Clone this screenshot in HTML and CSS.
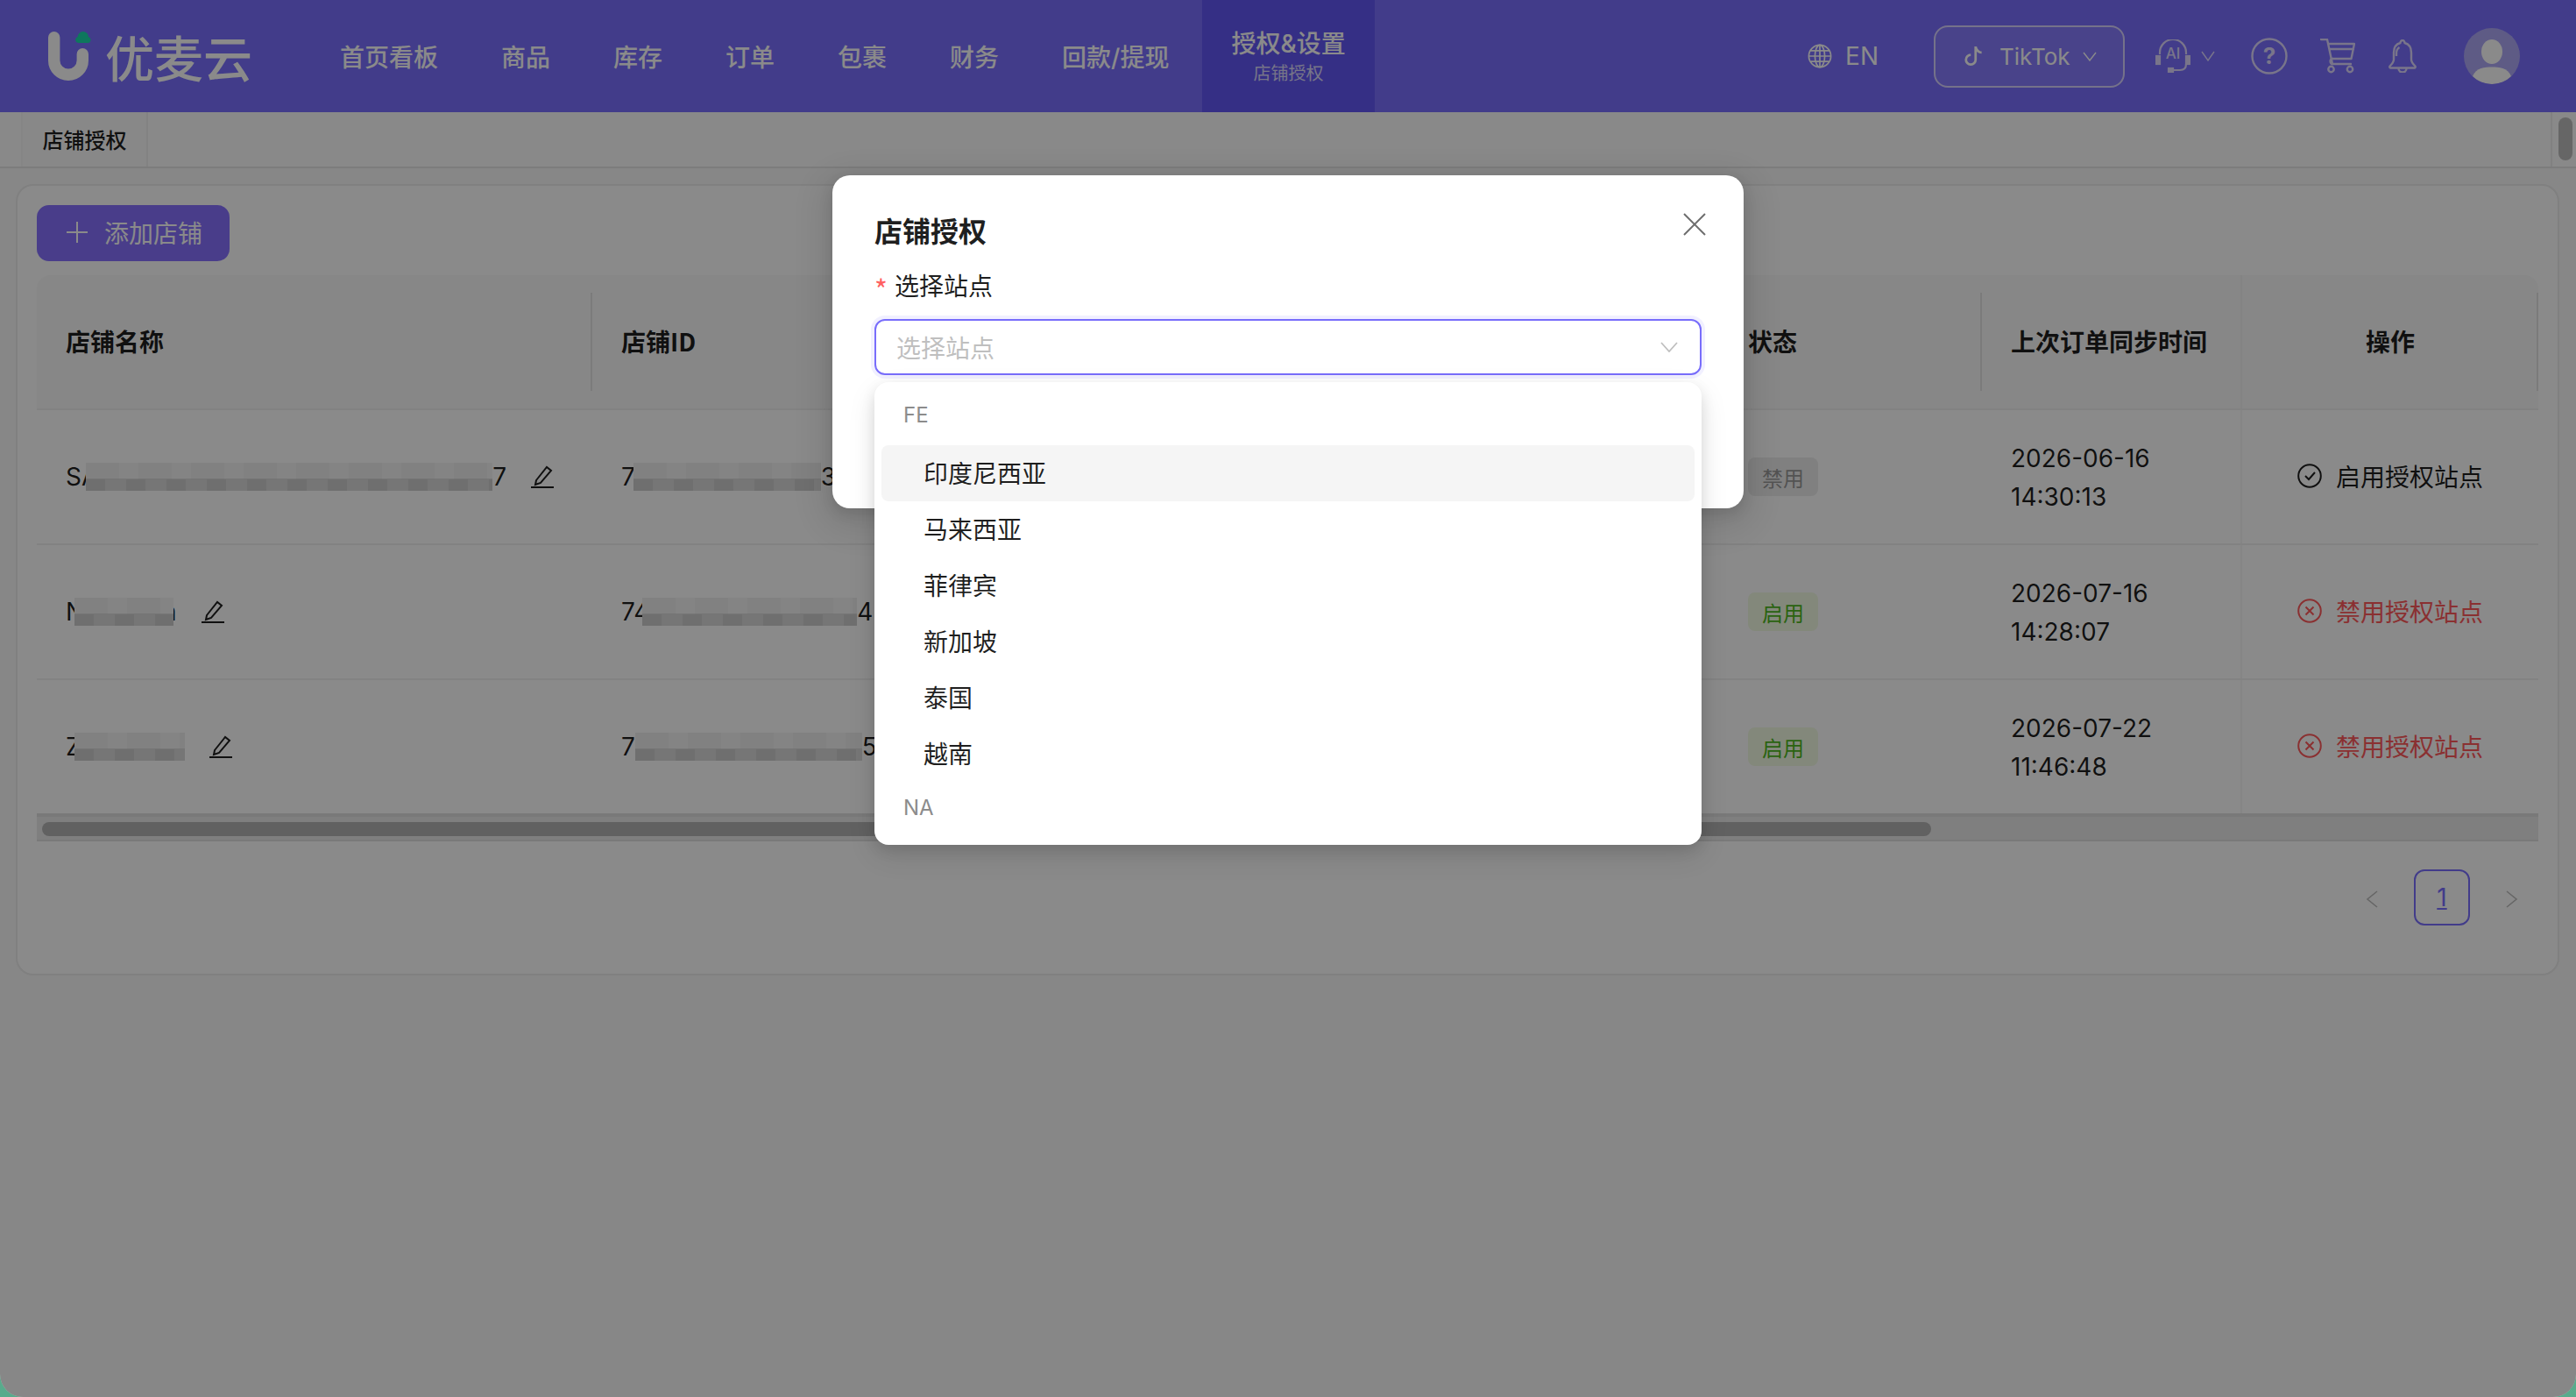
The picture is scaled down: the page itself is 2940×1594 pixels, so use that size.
FILE: index.html
```html
<!DOCTYPE html>
<html lang="zh-CN">
<head>
<meta charset="utf-8">
<title>店铺授权</title>
<link rel="stylesheet" href="styles.css">
</head>
<body>
<div class="app">
  <header class="topbar">
    <div class="logo">
      <svg class="logo-mark" viewBox="0 0 50 56" width="50" height="56">
        <path d="M6.7 6.7V33a16.3 16.3 0 0 0 32.6 0V25.7" fill="none" stroke="#fff" stroke-width="13.4" stroke-linecap="round"/>
        <path class="logo-cloud" d="M34.5 13a3.6 3.6 0 0 1-.9-7A6.2 6.2 0 0 1 40 0a6.2 6.2 0 0 1 6 6 3.6 3.6 0 0 1-.5 7z"/>
      </svg>
      <span class="logo-text">优麦云</span>
    </div>
    <nav class="nav">
      <a class="nav-item">首页看板</a>
      <a class="nav-item">商品</a>
      <a class="nav-item">库存</a>
      <a class="nav-item">订单</a>
      <a class="nav-item">包裹</a>
      <a class="nav-item">财务</a>
      <a class="nav-item">回款/提现</a>
      <a class="nav-item nav-active"><span class="nav-title">授权&amp;设置</span><span class="nav-sub">店铺授权</span></a>
    </nav>
    <div class="tools">
      <div class="lang">
        <svg viewBox="0 0 28 28" width="28" height="28" fill="none" stroke="currentColor" stroke-width="1.7"><circle cx="14" cy="14" r="12.6"/><ellipse cx="14" cy="14" rx="5.6" ry="12.6"/><path d="M14 1.4v25.2M1.4 14h25.2M3.2 7.8h21.6M3.2 20.2h21.6"/></svg>
        <span>EN</span>
      </div>
      <button class="platform">
        <svg viewBox="0 0 16 16" width="22" height="24" fill="currentColor"><path d="M9 0h1.98c.144.715.54 1.617 1.235 2.512C12.895 3.389 13.797 4 15 4v2c-1.753 0-3.07-.814-4-1.829V11a5 5 0 1 1-5-5v2a3 3 0 1 0 3 3V0Z"/></svg>
        <span>TikTok</span>
        <svg class="caret" viewBox="0 0 16 11" width="16" height="11" fill="none" stroke="currentColor" stroke-width="1.4"><path d="M1 1l7 9 7-9"/></svg>
      </button>
      <div class="ai">
        <svg class="icon" viewBox="0 0 40 38" width="40" height="38" fill="none" stroke="currentColor" stroke-width="2.2">
          <path d="M5 17V15a15 15 0 0 1 30 0v2"/>
          <rect x="1" y="19" width="4" height="9" fill="currentColor"/><rect x="35" y="19" width="4" height="9" fill="currentColor"/>
          <path d="M35 28c0 5-3 7-7 7H17"/><rect x="15" y="33" width="5" height="4" fill="currentColor"/>
          <text class="ai-text" x="20" y="22" text-anchor="middle">AI</text>
        </svg>
        <svg class="icon" viewBox="0 0 16 12" width="16" height="12" fill="none" stroke="currentColor" stroke-width="1.4"><path d="M1 1l7 10 7-10"/></svg>
      </div>
      <svg class="icon tool-help" viewBox="0 0 42 42" width="42" height="42" fill="none" stroke="currentColor" stroke-width="2.4">
        <circle cx="21" cy="21" r="19.5"/>
        <text class="help-text" x="21" y="30" text-anchor="middle">?</text>
      </svg>
      <svg class="icon tool-cart" viewBox="0 0 40 40" width="40" height="40" fill="none" stroke="currentColor" stroke-width="2.4" stroke-linejoin="round" stroke-linecap="round">
        <path d="M1 1h7l6 28h21"/><path d="M9.5 6h29.5l-3.5 17H14"/><path d="M11 12h27"/>
        <path d="M14 29c-3 0-3.500-6 0-6"/>
        <circle cx="12.500" cy="35" r="3.200"/><circle cx="34" cy="35" r="3.200"/>
      </svg>
      <svg class="icon tool-bell" viewBox="0 0 32 38" width="32" height="38" fill="none" stroke="currentColor" stroke-width="2.400" stroke-linejoin="round">
        <path d="M16 1c1.500 0 2.500 1.500 2.500 3 5.500 1.500 7.500 6 7.500 11v8c0 3 2 5 4.500 7.500.5 1 0 2-1 2H2.500c-1 0-1.500-1-1-2C4 28 6 26 6 23v-8c0-5 2-9.500 7.500-11 0-1.500 1-3 2.500-3z"/>
        <path d="M11.500 33c0 6 9 6 9 0"/>
        <path d="M9 19v-3c0-3 1-5.500 3.500-7"/>
      </svg>
      <div class="avatar">
        <svg viewBox="0 0 64 64" width="64" height="64">
          <ellipse cx="32" cy="27" rx="12" ry="14" fill="#fff"/>
          <path d="M10 55c4-10 14-10.500 22-10.500S50 45 54 55c-5 5-13 9-22 9s-17-4-22-9z" fill="#fff"/>
        </svg>
      </div>
    </div>
  </header>

  <div class="tabs">
    <div class="tab">店铺授权</div>
    <div class="vbar"><span class="vbar-thumb"></span></div>
  </div>

  <main class="content">
    <section class="card">
      <button class="add-btn">
        <svg viewBox="0 0 24 24" width="24" height="24" fill="none" stroke="currentColor" stroke-width="2"><path d="M12 0v24M0 12h24"/></svg>
        <span>添加店铺</span>
      </button>

      <div class="table">
        <div class="tr thead">
          <div class="th th-split">店铺名称</div>
          <div class="th">店铺ID</div>
          <div class="th th-split">状态</div>
          <div class="th">上次订单同步时间</div>
          <div class="th th-fixed th-end">操作</div>
        </div>

        <div class="tr">
          <div class="td"><span class="cut">SA</span><i class="mosaic m-name1"></i><span>7</span>
            <svg class="edit" viewBox="0 0 26 26" width="26" height="26" fill="none" stroke="currentColor" stroke-width="2"><path d="M6 17 18 2l5 4-12 14-6 2z"/><path d="M0 25h26"/></svg></div>
          <div class="td"><span class="cut">7</span><i class="mosaic m-id1"></i><span>3</span></div>
          <div class="td"><span class="tag tag-off">禁用</span></div>
          <div class="td td-time">2026-06-16<br>14:30:13</div>
          <div class="td td-fixed">
            <svg class="act-icon" viewBox="0 0 28 28" width="28" height="28" fill="none" stroke="currentColor" stroke-width="2"><circle cx="14" cy="14" r="12.800"/><path d="M9 14l4 4 7-8"/></svg>
            <span>启用授权站点</span>
          </div>
        </div>

        <div class="tr">
          <div class="td"><span class="cut">N</span><i class="mosaic m-name2"></i><span>n</span>
            <svg class="edit" viewBox="0 0 26 26" width="26" height="26" fill="none" stroke="currentColor" stroke-width="2"><path d="M6 17 18 2l5 4-12 14-6 2z"/><path d="M0 25h26"/></svg></div>
          <div class="td"><span class="cut">74</span><i class="mosaic m-id2"></i><span>42</span></div>
          <div class="td"><span class="tag tag-on">启用</span></div>
          <div class="td td-time">2026-07-16<br>14:28:07</div>
          <div class="td td-fixed td-danger">
            <svg class="act-icon" viewBox="0 0 28 28" width="28" height="28" fill="none" stroke="currentColor" stroke-width="2"><circle cx="14" cy="14" r="12.800"/><path d="M9.500 9.500l9 9M18.500 9.500l-9 9"/></svg>
            <span>禁用授权站点</span>
          </div>
        </div>

        <div class="tr tr-last">
          <div class="td"><span class="cut">Z</span><i class="mosaic m-name3"></i>
            <svg class="edit" viewBox="0 0 26 26" width="26" height="26" fill="none" stroke="currentColor" stroke-width="2"><path d="M6 17 18 2l5 4-12 14-6 2z"/><path d="M0 25h26"/></svg></div>
          <div class="td"><span class="cut">7</span><i class="mosaic m-id3"></i><span>5</span></div>
          <div class="td"><span class="tag tag-on">启用</span></div>
          <div class="td td-time">2026-07-22<br>11:46:48</div>
          <div class="td td-fixed td-danger">
            <svg class="act-icon" viewBox="0 0 28 28" width="28" height="28" fill="none" stroke="currentColor" stroke-width="2"><circle cx="14" cy="14" r="12.800"/><path d="M9.500 9.500l9 9M18.500 9.500l-9 9"/></svg>
            <span>禁用授权站点</span>
          </div>
        </div>

        <div class="hbar"><span class="hbar-thumb"></span></div>
      </div>

      <div class="pagination">
        <span class="page-arrow"><svg viewBox="0 0 14 20" width="14" height="20" fill="none" stroke="currentColor" stroke-width="1.600"><path d="M13 1 2 10l11 9"/></svg></span>
        <span class="page-num">1</span>
        <span class="page-arrow"><svg viewBox="0 0 14 20" width="14" height="20" fill="none" stroke="currentColor" stroke-width="1.600"><path d="M1 1l11 9-11 9"/></svg></span>
      </div>
    </section>
  </main>

  <div class="mask"></div>

  <div class="modal">
    <h2 class="modal-title">店铺授权</h2>
    <svg class="modal-close" viewBox="0 0 26 26" width="26" height="26" fill="none" stroke="currentColor" stroke-width="2"><path d="M1 1l24 24M25 1 1 25"/></svg>
    <label class="field-label"><span class="req">*</span>选择站点</label>
    <div class="select">
      <span class="placeholder">选择站点</span>
      <svg viewBox="0 0 20 12" width="20" height="12" fill="none" stroke="currentColor" stroke-width="1.800"><path d="M1 1l9 10 9-10"/></svg>
    </div>
  </div>

  <div class="dropdown">
    <div class="group">FE</div>
    <div class="option option-active">印度尼西亚</div>
    <div class="option">马来西亚</div>
    <div class="option">菲律宾</div>
    <div class="option">新加坡</div>
    <div class="option">泰国</div>
    <div class="option">越南</div>
    <div class="group">NA</div>
  </div>
</div>
</body>
</html>
```
FILE: styles.css
```css
* { box-sizing: border-box; }
html, body { margin: 0; height: 100%; }
body {
  background: #58ab8c;
  font-family: "Inter", "Noto Sans CJK SC", "Noto Sans", sans-serif;
  font-size: 28px;
  color: rgba(0, 0, 0, .88);
}
.app {
  position: relative;
  height: 1594px;
  overflow: hidden;
  display: flex;
  flex-direction: column;
  background: #f9f9f9;
  border-radius: 0 0 26px 26px;
}

/* top bar */
.topbar {
  flex: none;
  height: 128px;
  display: flex;
  align-items: center;
  background: #7a6fff;
  color: #fff;
}
.logo {
  flex: none;
  width: 352px;
  padding-left: 55px;
  display: flex;
  align-items: center;
  gap: 15px;
}
.logo-cloud { fill: #1bdcad; }
.logo-text {
  font-family: "Noto Sans CJK SC", sans-serif;
  font-size: 56px;
  line-height: 56px;
  font-weight: 500;
  white-space: nowrap;
}
.nav { display: flex; height: 100%; }
.nav-item {
  display: flex;
  flex-direction: column;
  justify-content: center;
  align-items: center;
  padding: 0 36px;
  font-weight: 500;
  white-space: nowrap;
}
.nav-active {
  margin-left: 2px;
  padding: 0 33px;
  background: #6357f5;
}
.nav-title { line-height: 40px; }
.nav-sub { font-size: 20px; line-height: 28px; font-weight: 400; color: rgba(255, 255, 255, .78); }
.tools {
  margin-left: auto;
  padding-right: 64px;
  display: flex;
  align-items: center;
  gap: 38px;
}
.lang { display: flex; align-items: center; gap: 15px; margin-right: 25px; }
.platform {
  width: 218px;
  height: 71px;
  padding: 0 30px 0 32px;
  display: flex;
  align-items: center;
  border: 2px solid #d9d2ff;
  border-radius: 16px;
  background: rgba(255, 255, 255, .1);
  color: #fff;
  font: inherit;
  font-size: 26px;
}
.platform span { margin-left: 19px; }
.platform .caret { margin-left: auto; }
.ai { display: flex; align-items: center; gap: 12px; color: #dfd9ff; margin-left: -3px; }
.icon { display: block; color: #dfd9ff; }
.ai-text { font-size: 17px; font-weight: 500; fill: currentColor; stroke: none; }
.help-text { font-size: 26px; font-weight: 700; fill: currentColor; stroke: none; }
.tool-help { margin-left: 3px; margin-right: -1px; }
.tool-bell { margin-right: 16px; }
.avatar {
  width: 64px;
  height: 64px;
  border-radius: 50%;
  overflow: hidden;
  background: #aea8f5;
}
.avatar svg { display: block; }

/* tabs */
.tabs {
  flex: none;
  height: 64px;
  display: flex;
  justify-content: space-between;
  border-bottom: 2px solid #e6e6e6;
  background: #fdfdfd;
}
.tab {
  margin-left: 24px;
  width: 145px;
  padding-bottom: 2px;
  display: flex;
  align-items: center;
  justify-content: center;
  background: #fbfbfb;
  border-left: 2px solid #f6f6f6;
  border-right: 2px solid #f0f0f0;
  font-size: 24px;
  font-family: "Noto Sans CJK SC", sans-serif;
  font-weight: 500;
}
.vbar {
  width: 29px;
  padding: 6px 0 0 7px;
  border-left: 2px solid #eee;
}
.vbar-thumb {
  display: block;
  width: 16px;
  height: 49px;
  border-radius: 8px;
  background: #bdbdbd;
}

/* page body */
.content { flex: 1; padding: 18px 19px 0 18px; }
.card {
  height: 903px;
  padding: 22px;
  background: #fff;
  border: 2px solid #ececec;
  border-radius: 20px;
}
.add-btn {
  width: 220px;
  height: 64px;
  padding: 0 0 2px 34px;
  display: flex;
  align-items: center;
  gap: 19px;
  border: 0;
  border-radius: 14px;
  background: #8772ff;
  color: #fff;
  font: inherit;
}
.table { margin-top: 16px; }
.tr {
  display: grid;
  grid-template-columns: 634px 1286px 300px 295px 340px;
  height: 154px;
  border-bottom: 2px solid #f0f0f0;
}
.tr-last { height: 152px; border-bottom: 0; }
.thead { border-radius: 16px 16px 0 0; background: #fafafa; }
.th {
  position: relative;
  display: flex;
  align-items: center;
  padding: 0 0 3px 33px;
  font-weight: 600;
  font-family: "Noto Sans CJK SC", sans-serif;
}
.th-split::after, .th-end::after {
  content: "";
  position: absolute;
  right: 0;
  top: 20px;
  bottom: 20px;
  width: 2px;
  background: #e4e4e4;
}
.th-fixed { padding-left: 0; justify-content: center; border-left: 2px solid #f2f2f2; }
.td { display: flex; align-items: center; padding-left: 33px; white-space: nowrap; }
.td-time { display: block; align-self: center; line-height: 44px; padding-top: 1px; }
.td-fixed {
  padding: 0 0 2px 63px;
  gap: 16px;
  border-left: 2px solid #f5f5f5;
  font-family: "Noto Sans CJK SC", sans-serif;
}
.td-danger { color: #ff5a5c; }
.act-icon { flex: none; }
.cut { overflow: hidden; }
.mosaic {
  position: relative;
  display: block;
  flex: none;
  height: 32px;
  background:
    repeating-linear-gradient(90deg, rgba(0, 0, 0, .06) 0 22px, rgba(0, 0, 0, 0) 22px 46px) 0 100% / 100% 42% no-repeat,
    repeating-linear-gradient(90deg, rgba(0, 0, 0, .025) 0 38px, rgba(0, 0, 0, 0) 38px 60px) 0 0 / 100% 58% no-repeat,
    linear-gradient(#f4f4f4 0 55%, #dadada 55% 100%);
}
.m-name1 { width: 464px; margin-left: -14px; }
.m-id1 { width: 214px; margin-left: -2px; }
.m-name2 { width: 113px; margin: 0 -13px 0 -11px; }
.m-id2 { width: 245px; margin-left: -8px; }
.m-name3 { width: 126px; margin-left: -8px; }
.m-id3 { width: 259px; }
.edit { flex: none; margin-left: 28px; }
.tag {
  width: 80px;
  height: 44px;
  display: flex;
  align-items: center;
  justify-content: center;
  border-radius: 8px;
  font-size: 24px;
  font-family: "Noto Sans CJK SC", sans-serif;
}
.tag-off { background: #ededed; color: #999; }
.tag-on { background: #f2fbe4; color: #4fb81f; }
.hbar {
  height: 32px;
  padding: 6px 0 0 6px;
  background: #ebebeb;
  border-top: 4px solid #e0e0e0;
  border-bottom: 2px solid #e0e0e0;
}
.hbar-thumb {
  display: block;
  width: 2156px;
  height: 16px;
  border-radius: 8px;
  background: #b4b4b4;
}
.pagination {
  margin: 32px -2px 0 0;
  display: flex;
  justify-content: flex-end;
  gap: 16px;
}
.page-arrow {
  width: 64px;
  height: 64px;
  padding-top: 3px;
  display: flex;
  align-items: center;
  justify-content: center;
  color: #bdbdbd;
}
.page-num {
  width: 64px;
  height: 64px;
  display: flex;
  align-items: center;
  justify-content: center;
  border: 2px solid #7a6fff;
  border-radius: 12px;
  color: #7a6fff;
  text-decoration: underline;
}

/* overlay */
.mask {
  position: absolute;
  inset: 0;
  background: rgba(0, 0, 0, .46);
}
.modal {
  position: absolute;
  left: 950px;
  top: 200px;
  width: 1040px;
  height: 380px;
  padding: 40px 48px 0;
  background: #fff;
  border-radius: 20px;
  box-shadow: 0 12px 32px 16px rgba(0, 0, 0, .08), 0 6px 16px rgba(0, 0, 0, .12);
  font-family: "Noto Sans CJK SC", sans-serif;
}
.modal-title {
  margin: 0;
  font-size: 32px;
  line-height: 44px;
  font-weight: 600;
}
.modal-close {
  position: absolute;
  left: 971px;
  top: 43px;
  color: #6e6e6e;
}
.field-label {
  display: block;
  margin-top: 19px;
  line-height: 44px;
}
.req {
  display: inline-block;
  width: 23px;
  color: #ff5f61;
  font-size: 32px;
  line-height: 28px;
  vertical-align: middle;
}
.select {
  margin-top: 17px;
  height: 64px;
  padding: 0 25px 0 23px;
  display: flex;
  align-items: center;
  justify-content: space-between;
  border: 2px solid #786dfb;
  border-radius: 12px;
  box-shadow: 0 0 0 4px rgba(120, 109, 251, .1);
  color: #bfbfbf;
}
.dropdown {
  position: absolute;
  left: 998px;
  top: 436px;
  width: 944px;
  height: 528px;
  padding: 8px;
  background: #fff;
  border-radius: 16px;
  box-shadow: 0 12px 32px rgba(0, 0, 0, .1), 0 6px 16px rgba(0, 0, 0, .1);
  font-family: "Noto Sans CJK SC", sans-serif;
}
.group {
  height: 64px;
  padding: 0 0 6px 25px;
  display: flex;
  align-items: center;
  font-family: "Inter", sans-serif;
  font-size: 24px;
  color: #8c8c8c;
}
.option {
  height: 64px;
  padding: 0 0 3px 48px;
  display: flex;
  align-items: center;
  border-radius: 8px;
}
.option-active { background: #f5f5f5; }
```
